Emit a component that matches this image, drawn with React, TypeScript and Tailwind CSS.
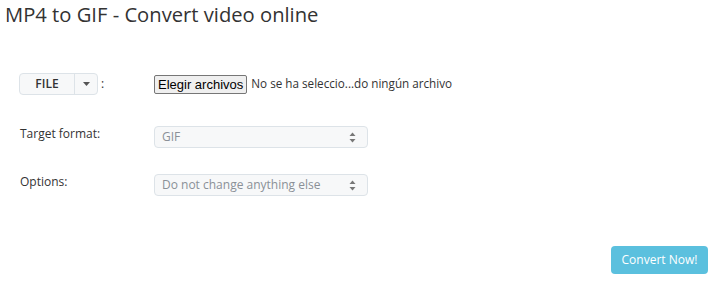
import React from 'react';

function Caret() {
  return (
    <svg className="w-[7px] h-[11px]" viewBox="0 0 7 11" fill="#777">
      <path d="M3.5 0.5 L6.5 4 L0.5 4 Z" />
      <path d="M3.5 10.5 L6.5 7 L0.5 7 Z" />
    </svg>
  );
}

function FakeSelect({ value }: { value: string }) {
  return (
    <div className="w-[214px] h-[22px] flex items-center justify-between pl-[7px] pr-[11px] rounded-[4px] border border-[#dde3e8] bg-[#f7f8f9] text-[12px] text-[#8a9097]">
      <span>{value}</span>
      <Caret />
    </div>
  );
}

export default function App() {
  return (
    <div className="w-[720px] h-[288px] bg-white font-['Open_Sans',sans-serif] text-[#333] relative">
      <h1 className="pl-[5px] pt-[0px] text-[20.2px] leading-[28px] text-[#333]">MP4 to GIF - Convert video online</h1>

      <div className="pl-[19px] mt-[45px] flex items-center h-[22px]">
        <div className="w-[135px] flex items-center">
          <div className="flex h-[22px] rounded-[4px] border border-[#dde3e8] bg-[#f7f8f9] text-[12px] font-semibold text-[#333]">
            <div className="w-[55px] flex items-center justify-center border-r border-[#dde3e8]">FILE</div>
            <div className="w-[22px] flex items-center justify-center">
              <svg className="w-[7px] h-[4px]" viewBox="0 0 7 4" fill="#555">
                <path d="M0 0 L7 0 L3.5 4 Z" />
              </svg>
            </div>
          </div>
          <span className="ml-[3px] text-[12px]">:</span>
        </div>
        <div className="flex items-center">
          <button className="h-[19px] px-[3px] border border-[#767676] rounded-[2px] bg-[#efefef] text-[13px] leading-[17px] text-black font-['Liberation_Sans',Arial,sans-serif]">
            Elegir archivos
          </button>
          <span className="ml-[4px] text-[11.7px] text-[#333]">No se ha seleccio...do ningún archivo</span>
        </div>
      </div>

      <div className="pl-[20px] mt-[31px] flex items-center h-[22px]">
        <div className="w-[134px] text-[12px] text-[#333] -mt-[7px]">Target format:</div>
        <FakeSelect value="GIF" />
      </div>

      <div className="pl-[20px] mt-[26px] flex items-center h-[22px]">
        <div className="w-[134px] text-[12px] text-[#333] -mt-[7px]">Options:</div>
        <FakeSelect value="Do not change anything else" />
      </div>

      <div className="flex justify-end pr-[12px] mt-[50px]">
        <button className="w-[97px] h-[28px] rounded-[4px] bg-[#5bc0de] text-white text-[12px]">Convert Now!</button>
      </div>
    </div>
  );
}
